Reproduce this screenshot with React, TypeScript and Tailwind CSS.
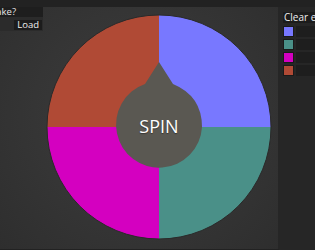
const slices = [
  { color: "#7878ff", d: "M112 112 L112 0 A112 112 0 0 1 224 112 Z" },
  { color: "#4a9088", d: "M112 112 L224 112 A112 112 0 0 1 112 224 Z" },
  { color: "#d400c0", d: "M112 112 L112 224 A112 112 0 0 1 0 112 Z" },
  { color: "#b04a35", d: "M112 112 L0 112 A112 112 0 0 1 112 0 Z" },
];

const entries = ["#7878ff", "#4a9088", "#d400c0", "#b04a35"];

function Wheel() {
  return (
    <div className="relative h-[226px] w-[226px]">
      <svg width="226" height="226" viewBox="-1 -1 226 226" className="absolute inset-0">
        {slices.map((s) => (
          <path key={s.color} d={s.d} fill={s.color} />
        ))}
        <circle cx="112" cy="112" r="112" fill="none" stroke="#2a2a2a" strokeWidth="1" />
        {/* hub with pointer */}
        <path
          d="M112 47 L126 69 Q155 81 155 112 A43 43 0 1 1 98 69 Z"
          fill="#5a5852"
        />
      </svg>
      <div className="absolute left-0 top-[99px] flex w-[226px] justify-center">
        <span className="text-[18px] font-medium leading-[26px] text-white [text-shadow:0_1px_1px_rgba(0,0,0,0.4)] font-['Open_Sans',sans-serif]">
          SPIN
        </span>
      </div>
    </div>
  );
}

export default function App() {
  return (
    <div className="flex h-[250px] w-[315px] flex-col overflow-hidden bg-[#222222] font-['Open_Sans',sans-serif]">
      <div className="h-[7px] shrink-0 bg-[#222222]" />
      <div className="flex flex-1">
        {/* Main stage */}
        <div className="relative h-[242px] w-[279px] shrink-0 bg-[radial-gradient(circle_at_50%_45%,#3d3d3d_0%,#353535_55%,#2e2e2e_100%)] border-r border-[#262626]">
          <div className="pl-[46px] pt-[7px]">
            <Wheel />
          </div>

          {/* Top-left controls */}
          <div className="absolute left-0 top-0 w-[43px] bg-[#2b2b2b]">
            <div className="flex h-[10px] items-center justify-end overflow-hidden bg-[#1e1e1e] pr-[27px]">
              <span className="shrink-0 whitespace-nowrap text-[9.5px] font-medium leading-[10px] text-[#e6e6e6]">
                What should I make?
              </span>
            </div>
            <div className="flex h-[14px] items-end justify-end pb-[1px] pr-[1px]">
              <span className="flex h-[10px] items-center bg-[#1c1c1c] px-[3px] text-[9.5px] font-medium leading-[10px] text-[#f0f0f0]">
                Load
              </span>
            </div>
          </div>
        </div>

        {/* Right panel */}
        <div className="flex min-w-0 flex-1 flex-col bg-[#262626] pl-[4px] pt-[5px]">
          <div className="flex h-[11px] items-center overflow-hidden whitespace-nowrap bg-[#1c1c1c] pl-[1px] text-[10px] font-medium leading-[11px] text-[#f0f0f0]">
            Clear entries
          </div>
          <div className="mt-[3px] flex flex-col gap-[2px]">
            {entries.map((c) => (
              <div key={c} className="flex items-center gap-[2px]">
                <div className="flex h-[11px] w-[11px] shrink-0 items-center justify-center bg-[#1a1a1a]">
                  <div className="h-[9px] w-[9px]" style={{ backgroundColor: c }} />
                </div>
                <div className="h-[11px] flex-1 bg-[#1e1e1e]" />
              </div>
            ))}
          </div>
        </div>
      </div>
    </div>
  );
}
